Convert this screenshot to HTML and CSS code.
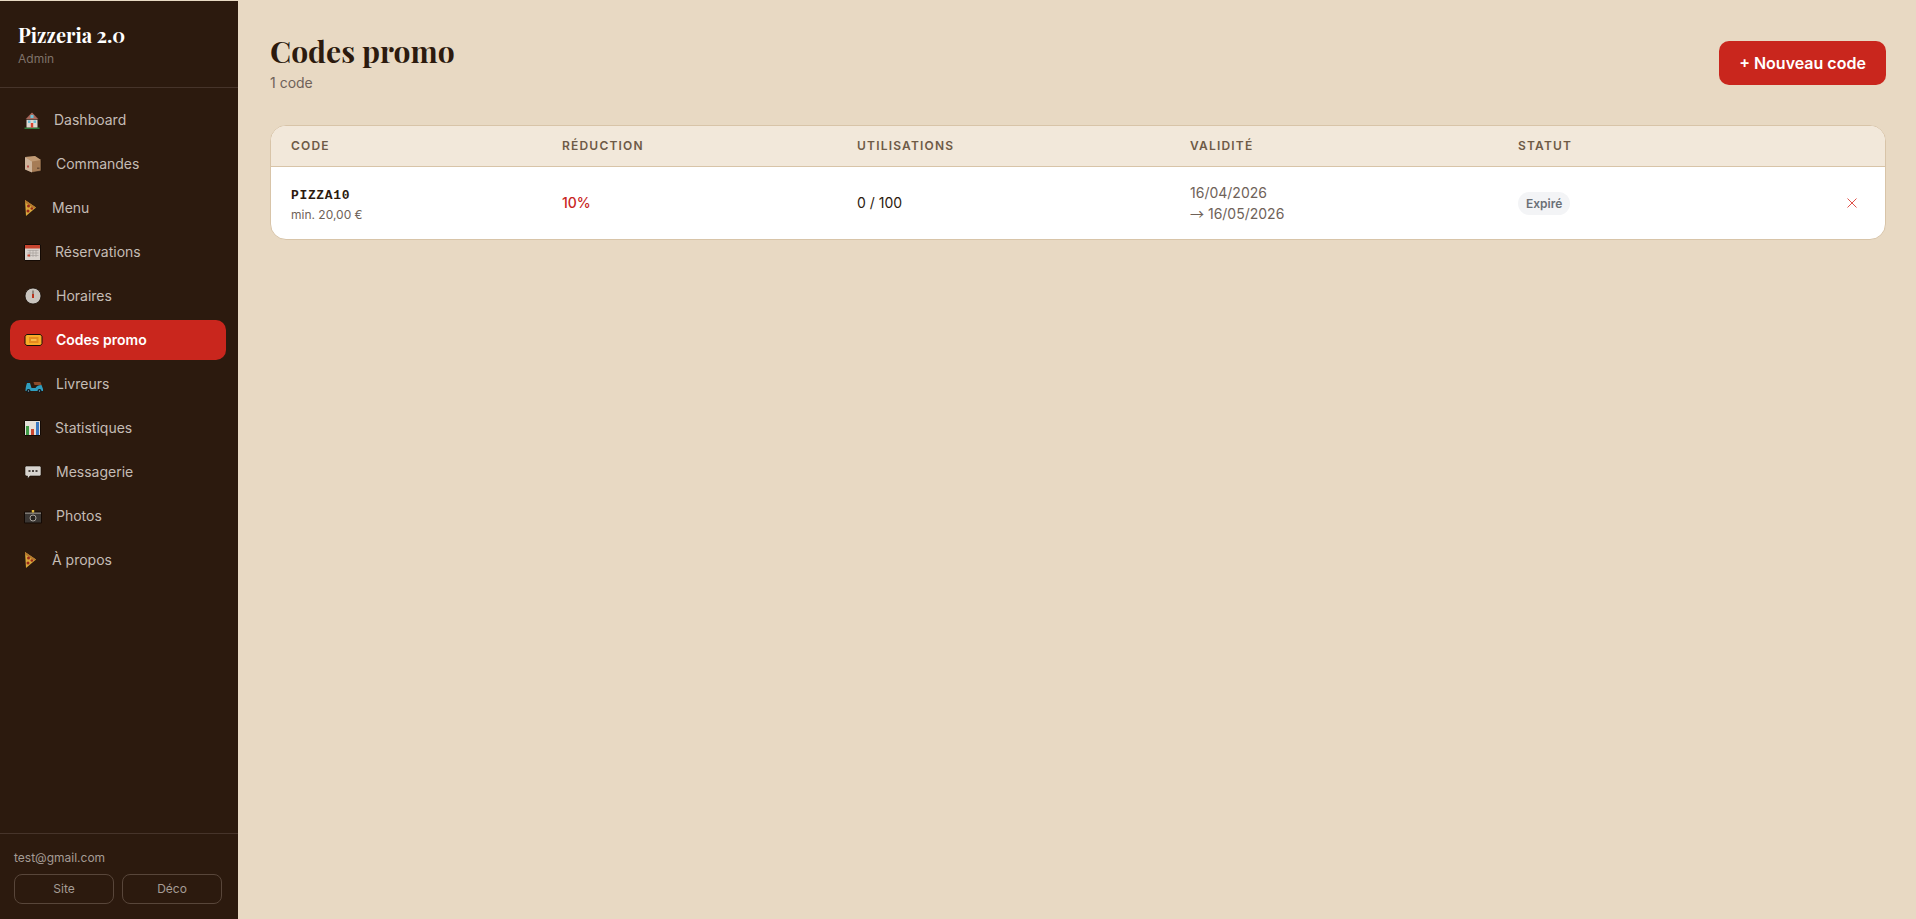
FILE: index.html
```html
<!DOCTYPE html>
<html lang="fr">
    <head>
        <meta charset="UTF-8">
        <meta name="viewport" content="width=device-width, initial-scale=1.0">
        <title>Codes promo - Pizzeria 2.0</title>
        <link rel="stylesheet" href="styles.css">
    </head>
    <body>
        <aside class="sidebar">
            <div class="brand">
                <div class="brand-name">Pizzeria 2.0</div>
                <div class="brand-sub">Admin</div>
            </div>

            <nav class="nav">
                <a class="nav-item" href="#">
                    <svg class="ico" width="18" height="20" viewBox="0 0 18 20"><path d="M.5 17.500h15V19H.5z" fill="#2f7d3a"/><path d="M2.500 9h11v8.500h-11z" fill="#ddd8d0"/><path d="M8 2 1 9.500h14z" fill="#a8685a" stroke="#1a0e06" stroke-width=".6"/><path d="M6.500 5h3v3h-3z" fill="#6cc0d8"/><path d="M4 10.500h2.500v2.500H4zM9.500 10.500H12v2.500H9.500z" fill="#6cc0d8"/><path d="M6.800 13h2.400v4.500H6.800z" fill="#d9432f"/></svg>
                    <span>Dashboard</span>
                </a>
                <a class="nav-item" href="#">
                    <svg class="ico" width="20" height="20" viewBox="0 0 20 20"><path d="M1 3 11 2l6 4v11l-9 1.500L1 15.500z" fill="#a67c56" stroke="#1a0e06" stroke-width=".6"/><path d="M1 3 11 2l6 4-9 1.500z" fill="#c19a74"/><path d="M1 3l7 4.500v11L1 15.500z" fill="#cdb39a"/><path d="M3 11.500h2v2H3z" fill="#b8504a"/><path d="M13 13.500h2.500v1.500H13z" fill="#6e5038"/></svg>
                    <span>Commandes</span>
                </a>
                <a class="nav-item" href="#">
                    <svg class="ico" width="16" height="20" viewBox="0 0 16 20"><path d="M1 2 12 9.500 2 18z" fill="#d9a93c"/><path d="M1 2 12 9.500l-1.500 1.200L1 4.500z" fill="#b5792e"/><circle cx="4.500" cy="8" r="1.500" fill="#9c2a1a"/><circle cx="7.800" cy="10.500" r="1.300" fill="#9c2a1a"/><circle cx="4" cy="13" r="1.500" fill="#9c2a1a"/></svg>
                    <span>Menu</span>
                </a>
                <a class="nav-item" href="#">
                    <svg class="ico" width="19" height="20" viewBox="0 0 19 20"><path d="M.5 2.500h16v16H.5z" fill="#d8d2cc" stroke="#140a04"/><path d="M1 3h15v3.500H1z" fill="#c9452f"/><path d="M3.500 8.500h11M3.500 11h11M3.500 13.500h11M6 8v7M9 8v7M12 8v7" stroke="#a8a29c" stroke-width=".7"/><path d="M3.500 12.500h2.500v2H3.500z" fill="#c9452f"/></svg>
                    <span>Réservations</span>
                </a>
                <a class="nav-item" href="#">
                    <svg class="ico" width="20" height="20" viewBox="0 0 20 20"><circle cx="9" cy="10" r="8" fill="#c9c4be" stroke="#140a04" stroke-width=".8"/><path d="M8.500 4.500h1V10h-1z" fill="#5a4a40"/><path d="M8 8h2v4H8z" fill="#b8331f"/></svg>
                    <span>Horaires</span>
                </a>
                <a class="nav-item active" href="#">
                    <svg class="ico" width="20" height="20" viewBox="0 0 20 20"><path d="M2.500 4.500h14l1.500 2v7l-1.500 2h-14L1 13.500v-7z" fill="#f9ab28" stroke="#1a0e06"/><path d="M5 7h9.500v6H5z" fill="#e58a1f"/><path d="M7 9h5.500v2H7z" fill="#f9bb48"/></svg>
                    <span>Codes promo</span>
                </a>
                <a class="nav-item" href="#">
                    <svg class="ico" width="20" height="20" viewBox="0 0 20 20"><path d="M3 9h3l1.500 5h4c1-2 3-3 6-3l1.500 4v2H1.500c0-3 .5-5 1.500-8z" fill="#2f9fc0"/><path d="M9.500 8h7l1 3h-7z" fill="#8a4a2a"/><path d="M1.500 6.500h4V8h-4z" fill="#14202a"/><circle cx="4.500" cy="17" r="2" fill="#0e1a22"/><circle cx="15.500" cy="17" r="2" fill="#0e1a22"/><circle cx="4.500" cy="17" r=".7" fill="#8fa6ae"/><circle cx="15.500" cy="17" r=".7" fill="#8fa6ae"/></svg>
                    <span>Livreurs</span>
                </a>
                <a class="nav-item" href="#">
                    <svg class="ico" width="19" height="20" viewBox="0 0 19 20"><path d="M.5 2.500h16v15H.5z" fill="#e4e0da" stroke="#140a04"/><path d="M2 8h3v9H2z" fill="#3f9a45"/><path d="M7 11h3v6H7z" fill="#c9452f"/><path d="M12 4h3v13h-3z" fill="#3a78c2"/></svg>
                    <span>Statistiques</span>
                </a>
                <a class="nav-item" href="#">
                    <svg class="ico" width="20" height="20" viewBox="0 0 20 20"><path d="M2 4h14l1 1v8l-1 1H6l-2.500 3v-3H2l-1-1V5z" fill="#d8d4cf" stroke="#140a04" stroke-width=".6"/><path d="M4.500 8h2v2h-2zM8 8h2v2H8zM11.500 8h2v2h-2z" fill="#4a4440"/></svg>
                    <span>Messagerie</span>
                </a>
                <a class="nav-item" href="#">
                    <svg class="ico" width="20" height="20" viewBox="0 0 20 20"><path d="M.5 6h17v11H.5z" fill="#3a3633" stroke="#140a04"/><path d="M1 6.500h16V8H1z" fill="#7d7771"/><path d="M7.800 4h2.400v2.500H7.800z" fill="#e0b93a"/><circle cx="9" cy="12" r="3" fill="#26221f" stroke="#a8a39c" stroke-width="1"/></svg>
                    <span>Photos</span>
                </a>
                <a class="nav-item" href="#">
                    <svg class="ico" width="16" height="20" viewBox="0 0 16 20"><path d="M1 2 12 9.500 2 18z" fill="#d9a93c"/><path d="M1 2 12 9.500l-1.500 1.200L1 4.500z" fill="#b5792e"/><circle cx="4.500" cy="8" r="1.500" fill="#9c2a1a"/><circle cx="7.800" cy="10.500" r="1.300" fill="#9c2a1a"/><circle cx="4" cy="13" r="1.500" fill="#9c2a1a"/></svg>
                    <span>À propos</span>
                </a>
            </nav>

            <div class="side-footer">
                <div class="side-mail">test@gmail.com</div>
                <div class="side-btns">
                    <a class="side-btn" href="#">Site</a>
                    <a class="side-btn" href="#">Déco</a>
                </div>
            </div>
        </aside>

        <main class="main">
            <div class="page-head">
                <div>
                    <h1>Codes promo</h1>
                    <p class="count">1 code</p>
                </div>
                <button class="btn-new" type="button">+ Nouveau code</button>
            </div>

            <div class="card">
                <table class="promo-table">
                    <thead>
                        <tr>
                            <th class="col-code">Code</th>
                            <th class="col-red">Réduction</th>
                            <th class="col-use">Utilisations</th>
                            <th class="col-val">Validité</th>
                            <th class="col-stat">Statut</th>
                            <th></th>
                        </tr>
                    </thead>
                    <tbody>
                        <tr>
                            <td>
                                <div class="code">PIZZA10</div>
                                <div class="code-min">min. 20,00 €</div>
                            </td>
                            <td class="percent">10%</td>
                            <td class="uses">0 / 100</td>
                            <td class="dates">16/04/2026<br><span class="arrow">→</span> 16/05/2026</td>
                            <td class="status"><span class="badge">Expiré</span></td>
                            <td class="actions">
                                <button class="btn-del" type="button" aria-label="Supprimer">
                                    <svg width="10" height="10" viewBox="0 0 10 10"><path d="M.5.500l9 9M9.500.500l-9 9" stroke="currentColor" stroke-width="1" fill="none"/></svg>
                                </button>
                            </td>
                        </tr>
                    </tbody>
                </table>
            </div>
        </main>
    </body>
</html>
```

FILE: styles.css
```css
* {
    box-sizing: border-box;
}
html, body {
    height: 100%;
}
body {
    margin: 0;
    display: flex;
    height: 919px;
    overflow: hidden;
    font-family: Inter, "Liberation Sans", sans-serif;
    background-color: #e8d9c3;
    color: #2c1a0e;
}
.sidebar {
    width: 238px;
    flex-shrink: 0;
    display: flex;
    flex-direction: column;
    background: #2c1a0e;
    margin-top: 1px;
}
.brand {
    height: 87px;
    padding: 21px 18px 0;
    border-bottom: 1px solid #46342a;
}
.brand-name {
    font-family: "Playfair Display", "Liberation Serif", serif;
    font-size: 20px;
    font-weight: 700;
    line-height: 26px;
    color: #fff;
}
.brand-sub {
    margin-top: 3px;
    font-size: 12px;
    line-height: 16px;
    color: #7f726a;
}
.nav {
    flex: 1;
    display: flex;
    flex-direction: column;
    gap: 4px;
    padding: 12px 12px 0 10px;
}
.nav-item {
    display: flex;
    align-items: center;
    gap: 12px;
    height: 40px;
    padding: 0 14px 2px;
    border-radius: 10px;
    font-size: 14px;
    font-weight: 400;
    color: #c4bcb5;
    text-decoration: none;
}
.nav-item.active {
    background: #c9261d;
    color: #fff;
    font-weight: 600;
}
.ico {
    flex-shrink: 0;
    margin-top: 2px;
}
.side-footer {
    height: 86px;
    padding: 16px 16px 0 14px;
    border-top: 1px solid #46342a;
}
.side-mail {
    font-size: 12px;
    line-height: 16px;
    color: #a59c95;
}
.side-btns {
    display: flex;
    gap: 8px;
    margin-top: 8px;
}
.side-btn {
    flex: 1;
    height: 30px;
    line-height: 28px;
    text-align: center;
    border: 1px solid #58463a;
    border-radius: 8px;
    font-size: 12px;
    color: #a59c95;
    text-decoration: none;
}
.main {
    flex: 1;
    padding: 32px 30px 0 32px;
}
.page-head {
    display: flex;
    justify-content: space-between;
    align-items: flex-start;
    margin-bottom: 32px;
}
h1 {
    margin: 0;
    font-family: "Playfair Display", "Liberation Serif", serif;
    font-size: 30px;
    font-weight: 700;
    line-height: 38px;
    color: #2c1a0e;
}
.count {
    margin: 3px 0 0;
    font-size: 14px;
    line-height: 20px;
    color: #6f6259;
}
.btn-new {
    margin-top: 9px;
    width: 167px;
    height: 44px;
    background: #c9261d;
    color: #fff;
    border: none;
    border-radius: 10px;
    font-family: inherit;
    font-size: 16px;
    font-weight: 600;
}
.card {
    background: #fff;
    border: 1px solid #d8c4a8;
    border-radius: 16px;
    overflow: hidden;
}
.promo-table {
    width: 100%;
    border-collapse: collapse;
    table-layout: fixed;
}
.promo-table th {
    height: 40px;
    padding: 0 20px;
    background: #f2e8da;
    border-bottom: 1px solid #d8c4a8;
    text-align: left;
    font-size: 12px;
    font-weight: 600;
    letter-spacing: 1.200px;
    text-transform: uppercase;
    color: #6e5a46;
}
.col-code { width: 271px; }
.col-red { width: 295px; }
.col-use { width: 333px; }
.col-val { width: 328px; }
.col-stat { width: 200px; }
.promo-table td {
    height: 73px;
    padding: 0 20px;
    font-size: 14px;
    vertical-align: middle;
}
.code {
    padding-top: 4px;
    font-family: "Liberation Mono", monospace;
    font-size: 13px;
    font-weight: 700;
    letter-spacing: 0.650px;
    line-height: 18px;
    color: #2c1a0e;
}
.code-min {
    margin-top: 2px;
    font-size: 12px;
    line-height: 16px;
    color: #6f6259;
}
.percent {
    color: #c9261d;
    font-weight: 500;
}
.uses {
    color: #2c1a0e;
}
.promo-table .dates {
    padding-top: 2px;
    line-height: 20px;
    color: #6f6259;
}
.arrow {
    font-family: "Noto Sans CJK JP", sans-serif;
}
.promo-table .status {
    padding-top: 2px;
}
.badge {
    display: inline-block;
    padding: 0 8px;
    height: 23px;
    line-height: 23px;
    border-radius: 12px;
    background: #f3f4f6;
    color: #6b7076;
    font-size: 12px;
    font-weight: 600;
}
.actions {
    text-align: right;
}
.btn-del {
    border: none;
    background: none;
    padding: 0 8px;
    color: #e0524a;
}
```
